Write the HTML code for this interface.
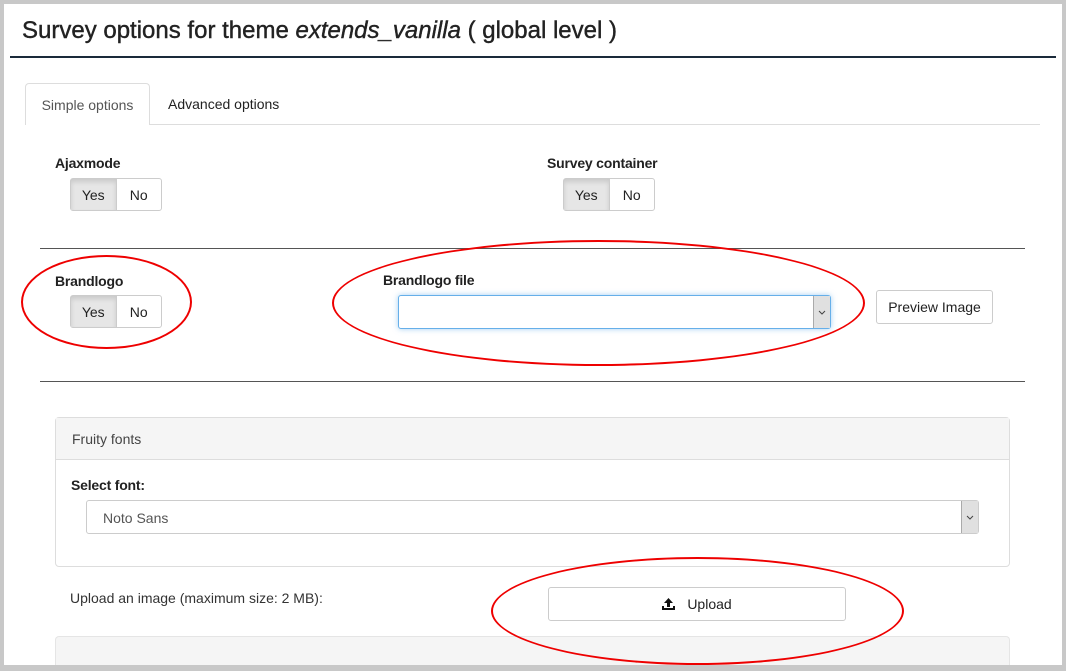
<!DOCTYPE html>
<html><head><meta charset="utf-8"><style>
*{box-sizing:border-box;margin:0;padding:0}
body{width:1066px;height:671px;background:#c8c8c8;font-family:"Liberation Sans",sans-serif;color:#333;position:relative;overflow:hidden}
.a{position:absolute}
#w{left:4px;top:4px;width:1058px;height:661px;background:#fff}
.btn{position:absolute;border:1px solid #ccc;border-radius:3px;background:#fff;font-size:14px;color:#222;display:flex;align-items:center;justify-content:center}
.yn{position:absolute;width:92px;height:33px;display:flex;border:1px solid #ccc;border-radius:3px;font-size:14px;color:#222}
.yn div{flex:1;display:flex;align-items:center;justify-content:center}
.yn div:first-child{background:#e6e6e6;border-right:1px solid #ccc;box-shadow:inset 0 3px 5px rgba(0,0,0,.12)}
.lbl{position:absolute;font-size:14px;font-weight:bold;color:#222;letter-spacing:-0.2px}
.hr{position:absolute;height:1px;background:#555}
.sel{position:absolute;border:1px solid #ccc;border-radius:3px;background:#fff}
.arr{position:absolute;right:0;top:0;bottom:0;width:17px;background:#e0e0e0;border-left:1px solid #aaa;display:flex;align-items:center;justify-content:center}
.ell{position:absolute;border:2px solid #e00;border-radius:50%}
</style></head><body>
<div class="a" id="w"></div>
<div class="a" style="left:22px;top:17px;font-size:24px;color:#222;-webkit-text-stroke:0.4px #222">Survey options for theme <i>extends_vanilla</i> ( global level )</div>
<div class="a" style="left:10px;top:56px;width:1046px;height:2px;background:#1a2a3a"></div>
<div class="a" style="left:26px;top:124px;width:1014px;height:1px;background:#ddd"></div>
<div class="a" style="left:25px;top:83px;width:125px;height:42px;border:1px solid #ddd;border-bottom:none;border-radius:4px 4px 0 0;background:#fff;font-size:14px;color:#555;display:flex;align-items:center;justify-content:center">Simple options</div>
<div class="a" style="left:168px;top:96px;font-size:14px;color:#222">Advanced options</div>
<div class="lbl" style="left:55px;top:155px">Ajaxmode</div>
<div class="yn" style="left:70px;top:178px"><div>Yes</div><div>No</div></div>
<div class="lbl" style="left:547px;top:155px">Survey container</div>
<div class="yn" style="left:563px;top:178px"><div>Yes</div><div>No</div></div>
<div class="hr" style="left:40px;top:248px;width:985px"></div>
<div class="lbl" style="left:55px;top:273px">Brandlogo</div>
<div class="yn" style="left:70px;top:295px"><div>Yes</div><div>No</div></div>
<div class="lbl" style="left:383px;top:272px">Brandlogo file</div>
<div class="sel" style="left:398px;top:295px;width:433px;height:34px;border-color:#66afe9;box-shadow:0 0 6px rgba(102,175,233,.6)"><div class="arr"><svg width="8" height="5" viewBox="0 0 8 5"><path d="M1 1l3 3 3-3" fill="none" stroke="#444" stroke-width="1"/></svg></div></div>
<div class="btn" style="left:876px;top:290px;width:117px;height:34px">Preview Image</div>
<div class="hr" style="left:40px;top:381px;width:985px"></div>
<div class="a" style="left:55px;top:417px;width:955px;height:150px;border:1px solid #ddd;border-radius:4px"></div>
<div class="a" style="left:56px;top:418px;width:953px;height:42px;background:#f5f5f5;border-bottom:1px solid #ddd;font-size:14px;color:#444;padding:13px 0 0 16px">Fruity fonts</div>
<div class="lbl" style="left:71px;top:477px">Select font:</div>
<div class="sel" style="left:86px;top:500px;width:893px;height:34px;font-size:14px;color:#555;padding:9px 0 0 16px">Noto Sans<div class="arr"><svg width="8" height="5" viewBox="0 0 8 5"><path d="M1 1l3 3 3-3" fill="none" stroke="#444" stroke-width="1"/></svg></div></div>
<div class="a" style="left:70px;top:590px;font-size:14px;color:#333">Upload an image (maximum size: 2 MB):</div>
<div class="btn" style="left:548px;top:587px;width:298px;height:34px"><svg width="13" height="12" viewBox="0 0 13 12" style="margin-right:12px"><path d="M6.5 0L2 5h3v4h3V5h3z M0 10h13v2H0z M0 8h2v3H0z M11 8h2v3h-2z" fill="#111"/></svg>Upload</div>
<div class="a" style="left:55px;top:636px;width:955px;height:29px;background:#f5f5f5;border:1px solid #e5e5e5;border-bottom:none;border-radius:4px 4px 0 0"></div>
<div class="ell" style="left:21px;top:255px;width:171px;height:94px"></div>
<div class="ell" style="left:332px;top:240px;width:533px;height:126px"></div>
<div class="ell" style="left:491px;top:557px;width:413px;height:108px"></div>
</body></html>
